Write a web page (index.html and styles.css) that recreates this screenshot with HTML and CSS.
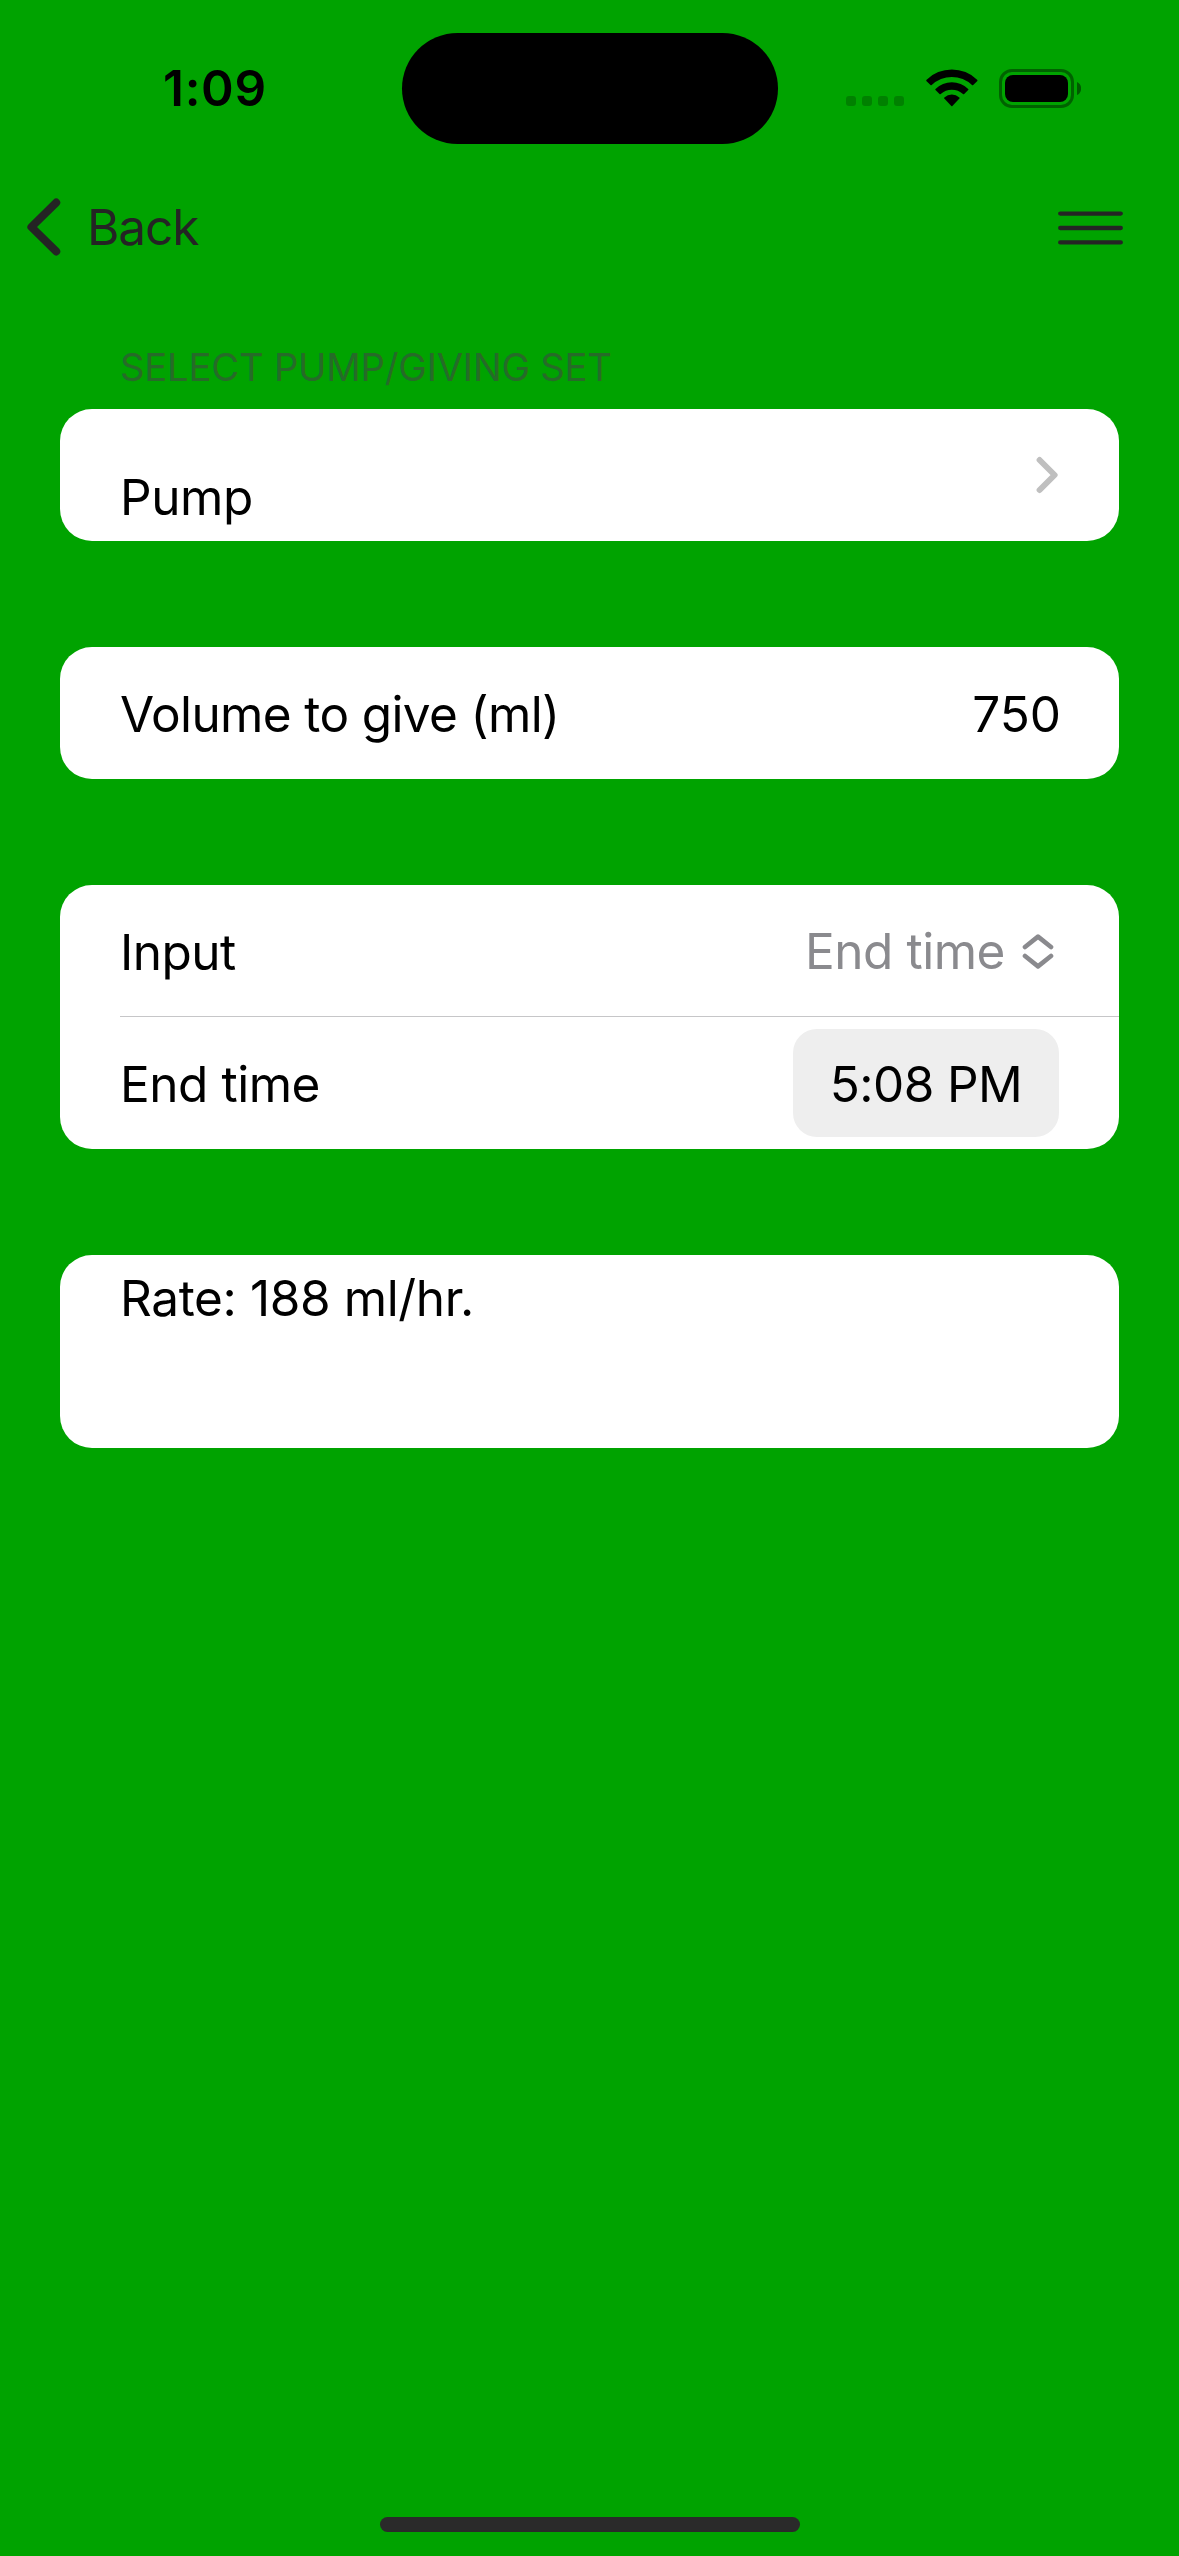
FILE: index.html
```html
<!DOCTYPE html>
<html lang="en">
<head>
<meta charset="utf-8">
<title>Pump rate</title>
<link rel="stylesheet" href="styles.css">
</head>
<body>
<div class="screen">
  <header class="status">
    <div class="clock">1:09</div>
    <div class="island"></div>
    <div class="indicators">
      <svg class="cellular" width="58" height="10" viewBox="0 0 58 10">
        <rect x="0" width="10" height="10" rx="3"/><rect x="16" width="10" height="10" rx="3"/><rect x="32" width="10" height="10" rx="3"/><rect x="48" width="10" height="10" rx="3"/>
      </svg>
      <svg class="wifi" width="52" height="38" viewBox="0 0 52 38">
        <path d="M0.6 12.2Q-0.1 11.4 0.6 10.7A36.2 36.2 0 0 1 51.1 10.7Q51.8 11.4 51.1 12.2L47.2 16.1Q46.6 16.6 46 16.1A29 29 0 0 0 5.7 16.1Q5.1 16.6 4.5 16.1Z"/>
        <path d="M9.5 21.1Q8.9 20.5 9.5 19.9A23.4 23.4 0 0 1 42.2 19.9Q42.8 20.5 42.2 21.1L38.2 25.1Q37.6 25.6 37 25.1A16.2 16.2 0 0 0 14.7 25.1Q14.1 25.6 13.5 25.1Z"/>
        <path d="M18.3 29.6Q17.8 29 18.4 28.4A11.2 11.2 0 0 1 33.3 28.4Q33.9 29 33.4 29.6L26.4 36.9Q25.85 37.4 25.3 36.9Z"/>
      </svg>
      <svg class="battery" width="82" height="39" viewBox="0 0 82 39">
        <rect class="shell" x="1.5" y="1.5" width="72" height="36" rx="11.5"/>
        <path class="tip" d="M78 13a7.2 7.2 0 0 1 0 13z"/>
        <rect x="6" y="6" width="63" height="27" rx="8"/>
      </svg>
    </div>
  </header>
  <nav class="nav">
    <div class="back">
      <svg width="34" height="58" viewBox="0 0 34 58"><path d="M29.2 4.6L4.4 29L29.2 53.4"/></svg>
      <span>Back</span>
    </div>
    <svg class="menu" width="66" height="34" viewBox="0 0 66 34"><path d="M2.2 2.6H62.8M2.2 17H62.8M2.2 31.4H62.8"/></svg>
  </nav>
  <main class="form">
    <h2 class="heading">SELECT PUMP/GIVING SET</h2>
    <section class="card">
      <div class="row">
        <span class="label pump">Pump</span>
        <svg class="disclosure" width="22" height="38" viewBox="0 0 22 38"><path d="M3.6 4L18.6 19L3.6 34"/></svg>
      </div>
    </section>
    <section class="card">
      <div class="row">
        <span class="label volume">Volume to give (ml)</span>
        <span class="amount">750</span>
      </div>
    </section>
    <section class="card">
      <div class="row">
        <span class="label input">Input</span>
        <span class="picker">
          <span>End time</span>
          <svg width="32" height="37" viewBox="0 0 32 37"><path d="M3 14L16 3.6L29 14M3 23L16 33.4L29 23"/></svg>
        </span>
      </div>
      <div class="divider"></div>
      <div class="row">
        <span class="label end">End time</span>
        <span class="time">5:08 PM</span>
      </div>
    </section>
    <section class="card result">
      <span class="rate">Rate: 188 ml/hr.</span>
    </section>
  </main>
  <div class="home"></div>
</div>
</body>
</html>
```
FILE: styles.css
```css
* { box-sizing: border-box; }

body {
  margin: 0;
  background: #00a300;
  color: #000;
  font-family: "Inter", sans-serif;
  font-size: 49.5px;
  line-height: 60px;
}

svg { display: block; flex: none; }
span { white-space: nowrap; }

.screen {
  display: flex;
  flex-direction: column;
  width: 1179px;
  height: 2556px;
}

.status {
  display: grid;
  grid-template-columns: 401.5px 376px 1fr;
  align-items: center;
  height: 177px;
}
.clock {
  padding: 0 0 1px 163px;
  font-weight: 600;
  letter-spacing: 0.7px;
}
.island {
  height: 111px;
  border-radius: 56px;
  background: #000;
}
.indicators {
  display: flex;
  align-items: center;
  padding: 0 0 1px 68.5px;
}
.cellular { margin-top: 26px; opacity: 0.2; }
.wifi { margin: 0 21px 0 22px; }
.battery .shell { fill: none; stroke: #000; stroke-width: 3; opacity: 0.4; }
.battery .tip { opacity: 0.45; }

.nav {
  display: flex;
  align-items: center;
  justify-content: space-between;
  height: 100px;
  padding: 0 55px 0 27px;
  color: #242424;
}
.back {
  display: flex;
  align-items: center;
  gap: 26px;
  letter-spacing: -1.1px;
}
.nav svg {
  fill: none;
  stroke: currentColor;
  stroke-width: 8;
  stroke-linecap: round;
  stroke-linejoin: round;
}
.nav .menu { margin-top: 1px; stroke-width: 4.3; }

.form {
  display: flex;
  flex-direction: column;
  gap: 106px;
  padding: 66px 60px 0;
}
.heading {
  margin: 0 0 -88px 60px;
  color: #266b28;
  font-size: 38.2px;
  font-weight: 400;
  line-height: 48px;
  letter-spacing: -0.2px;
}
.card {
  border-radius: 32px;
  background: #fff;
}
.row {
  display: flex;
  align-items: center;
  justify-content: space-between;
  height: 132px;
  padding: 0 60px;
}
.label { padding-top: 2px; }
.pump { padding-top: 44px; letter-spacing: -0.4px; }
.volume { letter-spacing: -0.63px; }
.input { letter-spacing: -0.5px; }
.end { letter-spacing: -0.45px; }
.disclosure {
  margin-right: 1px;
  fill: none;
  stroke: #bfbfbf;
  stroke-width: 6;
  stroke-linecap: round;
  stroke-linejoin: round;
}
.amount { padding-top: 2px; margin-right: -2px; }
.picker {
  display: flex;
  align-items: center;
  gap: 17px;
  margin-right: 5px;
  color: #8a8a8e;
  letter-spacing: -0.45px;
}
.picker svg {
  fill: none;
  stroke: currentColor;
  stroke-width: 4.6;
  stroke-linecap: round;
  stroke-linejoin: round;
}
.divider {
  height: 1px;
  margin: -1px 0 0 60px;
  background: #c6c6c8;
}
.time {
  width: 266px;
  height: 108px;
  border-radius: 24px;
  background: #eee;
  line-height: 110px;
  text-align: center;
  letter-spacing: -0.6px;
}
.result {
  height: 193px;
  padding: 13px 60px;
}
.rate { letter-spacing: -0.37px; }

.home {
  width: 420px;
  height: 15px;
  margin: auto auto 24px;
  border-radius: 8px;
  background: #2a2a2a;
}
```
